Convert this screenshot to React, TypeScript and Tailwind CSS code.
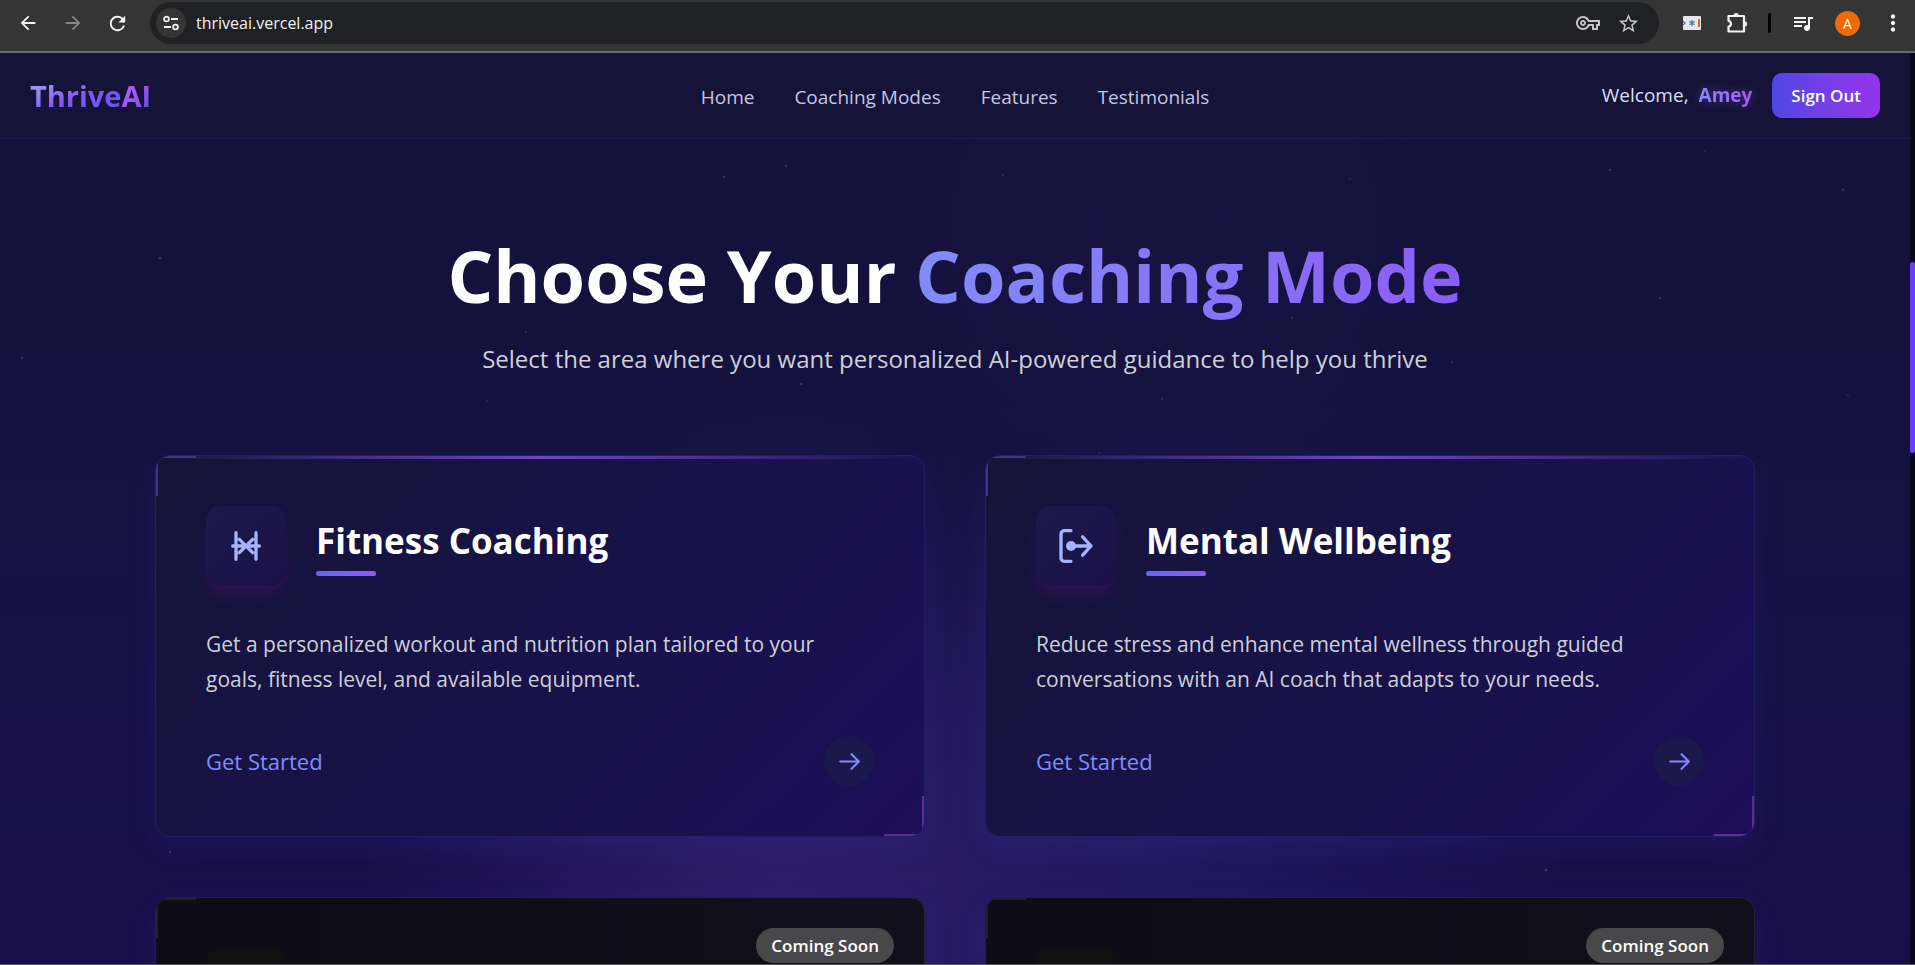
import type { ReactNode } from "react";
import {
  MdArrowBack,
  MdArrowForward,
  MdMoreVert,
  MdOutlineVpnKey,
  MdQueueMusic,
  MdRefresh,
  MdStarBorder,
} from "react-icons/md";

const STARS: [number, number, number][] = [
  [724, 124, 0.25], [786, 113, 0.2], [1003, 122, 0.15], [1610, 117, 0.25], [1705, 98, 0.12],
  [1843, 137, 0.2], [1660, 245, 0.2], [1452, 309, 0.15], [160, 205, 0.25], [22, 305, 0.2],
  [526, 279, 0.15], [801, 331, 0.2], [487, 348, 0.15], [1162, 346, 0.15], [1350, 126, 0.12],
  [1848, 342, 0.12], [1099, 400, 0.12], [1546, 817, 0.3], [170, 799, 0.2], [1292, 265, 0.15],
];

function ToolbarButton({ label, children, dim }: { label: string; children: ReactNode; dim?: boolean }) {
  return (
    <button
      type="button"
      aria-label={label}
      className={`flex h-[42px] w-[45px] items-center justify-center ${dim ? "text-[#858585]" : "text-[#f5f5f5]"}`}
    >
      {children}
    </button>
  );
}

function PuzzleIcon() {
  return (
    <svg width="24" height="24" viewBox="0 0 24 24" fill="none" stroke="currentColor" strokeWidth="2.2" strokeLinejoin="round">
      <path d="M3.5 5H19v15.5H3.5v-4.6a3.2 3.2 0 0 0 0-6.2z" />
      <path d="M8.6 4.5a2.6 2.6 0 0 1 5.2 0zM19.5 10.3a2.6 2.6 0 0 1 0 5.2z" fill="currentColor" stroke="none" />
    </svg>
  );
}

function PasswordIcon() {
  return (
    <svg width="18" height="14" viewBox="0 0 18 14">
      <rect width="18" height="14" rx="1" fill="#e4e7ea" />
      <path d="M0 5l2 2-2 2M9 4v6M6.4 5.5l5.2 3M11.6 5.5l-5.2 3" stroke="#4c7385" strokeWidth="1.3" fill="none" />
      <rect x="15" y="3" width="2" height="8" fill="#e05a4f" />
    </svg>
  );
}

function SiteInfoIcon() {
  return (
    <svg width="16" height="16" viewBox="0 0 16 16" fill="none" stroke="#f1f1f1" strokeWidth="1.8">
      <circle cx="3.5" cy="4" r="2.4" />
      <path d="M8 4h7M1 12h7" />
      <circle cx="12.5" cy="12" r="2.4" />
    </svg>
  );
}

function BrowserBar() {
  return (
    <div className="flex h-[53px] shrink-0 items-start border-b-2 border-[#6b6b6b] bg-[#353535] pt-[2px] pl-[5px]">
      <ToolbarButton label="Back"><MdArrowBack size={22} /></ToolbarButton>
      <ToolbarButton label="Forward" dim><MdArrowForward size={22} /></ToolbarButton>
      <ToolbarButton label="Reload"><MdRefresh size={23} /></ToolbarButton>
      <div className="ml-[10px] flex h-[42px] flex-1 items-center rounded-full bg-[#202124] pr-[19px] pl-[6px]">
        <button type="button" aria-label="Site information" className="flex size-[30px] items-center justify-center rounded-full bg-[#353535]">
          <SiteInfoIcon />
        </button>
        <input
          aria-label="Address"
          defaultValue="thriveai.vercel.app"
          className="ml-[10px] min-w-0 flex-1 bg-transparent text-[16px] text-[#f1f1f1] outline-none"
        />
        <button type="button" aria-label="Passwords" className="text-[#c4c4c4]"><MdOutlineVpnKey size={24} /></button>
        <button type="button" aria-label="Bookmark" className="ml-[17px] text-[#c4c4c4]"><MdStarBorder size={23} /></button>
      </div>
      <div className="ml-[10px] flex items-center">
        <ToolbarButton label="Password manager"><PasswordIcon /></ToolbarButton>
        <ToolbarButton label="Extensions"><PuzzleIcon /></ToolbarButton>
        <span className="mx-[9px] h-[20px] w-[3px] rounded-full bg-black" />
        <ToolbarButton label="Media"><MdQueueMusic size={24} /></ToolbarButton>
        <ToolbarButton label="Profile">
          <span className="flex size-[25px] items-center justify-center rounded-full bg-[#f06a00] text-[14px] text-white">A</span>
        </ToolbarButton>
        <ToolbarButton label="Menu"><MdMoreVert size={26} /></ToolbarButton>
      </div>
    </div>
  );
}

function SiteHeader() {
  return (
    <header className="relative grid grid-cols-[1fr_auto_1fr] items-center border-b border-[#1f1b55] bg-[#151338] px-[30px] py-[20px]">
      <a href="#home" className="flex justify-self-start text-[29px] leading-[40px] font-bold">
        <span className="bg-linear-to-br from-[#a5b0fc] via-[#8558f5] to-[#5b50f0] bg-clip-text text-transparent">Thrive</span>
        <span className="bg-linear-to-br from-[#b765fb] via-[#a352f5] to-[#4f46e5] bg-clip-text text-transparent">AI</span>
      </a>
      <nav className="flex gap-[40px] pt-[2px] text-[19px] leading-[28px] text-[#c3c6e4]">
        <a href="#home">Home</a>
        <a href="#modes">Coaching Modes</a>
        <a href="#features">Features</a>
        <a href="#testimonials">Testimonials</a>
      </nav>
      <div className="flex items-center justify-self-end text-[19px]">
        <span className="text-[#d9defa]">Welcome,</span>
        <span className="ml-[10px] bg-linear-to-r from-[#818cf8] to-[#a855f7] bg-clip-text font-bold text-transparent drop-shadow-[0_0_5px_rgba(139,92,246,0.4)]">
          Amey
        </span>
        <button
          type="button"
          className="ml-[20px] h-[45px] rounded-[10px] bg-linear-to-r from-[#4f46e5] to-[#9333ea] px-[19px] text-[17px] font-semibold text-white"
        >
          Sign Out
        </button>
      </div>
    </header>
  );
}

function FitnessIcon() {
  return (
    <svg width="40" height="40" viewBox="0 0 24 24" fill="none" stroke="#a5b4fc" strokeWidth="2" strokeLinecap="round" strokeLinejoin="round">
      <path d="M6 4v16M18 4v16M4 12h16M8 8l8 8M16 8l-8 8" />
    </svg>
  );
}

function MentalIcon() {
  return (
    <svg width="40" height="40" viewBox="0 0 24 24" fill="none" stroke="#a5b4fc" strokeWidth="2" strokeLinecap="round" strokeLinejoin="round">
      <path d="M9 21.2H5a2 2 0 0 1-2-2V4.8a2 2 0 0 1 2-2h4M16 6.5l5 5.5-5 5.5M21 12H9" />
      <circle cx="9" cy="12" r="3" fill="#a5b4fc" stroke="none" />
    </svg>
  );
}

function ModeCard({ icon, title, text }: { icon: ReactNode; title: string; text: string }) {
  return (
    <article className="relative overflow-hidden rounded-[15px] border border-[#231e62] bg-linear-135 from-[#141438] via-[#181248] to-[#1c0e58] p-[50px]">
      <span className="absolute inset-x-0 top-0 h-[3px] bg-linear-to-r from-transparent via-[#6d45c4] to-transparent" />
      <span className="absolute top-0 left-0 size-[40px] border-t-2 border-l-2 border-[#3b378f]" />
      <span className="absolute right-0 bottom-0 size-[40px] border-r-2 border-b-2 border-[#5b2e9c]" />
      <div className="flex items-center gap-[30px]">
        <div className="flex size-[80px] items-center justify-center rounded-[15px] bg-linear-135 from-[#1a1b4b] to-[#1b1048] shadow-[0_10px_15px_-3px_rgba(88,20,110,0.4),0_4px_6px_-4px_rgba(88,20,110,0.4)]">
          {icon}
        </div>
        <div>
          <h2 className="text-[35px] leading-[48px] font-bold text-white">{title}</h2>
          <div className="mt-[6px] h-[5px] w-[60px] rounded-full bg-linear-to-r from-[#6366f1] to-[#8b5cf6]" />
        </div>
      </div>
      <p className="mt-[41px] max-w-[630px] text-[21px] leading-[35px] text-[#cdcfd8]">{text}</p>
      <a href="#start" className="mt-[39px] flex items-center justify-between text-[22px] font-medium text-[#818cf8]">
        Get Started
        <span className="flex size-[50px] items-center justify-center rounded-full bg-[#1b184b]">
          <svg width="25" height="25" viewBox="0 0 24 24" fill="none" stroke="currentColor" strokeWidth="2" strokeLinecap="round" strokeLinejoin="round">
            <path d="M14 5l7 7-7 7M21 12H3" />
          </svg>
        </span>
      </a>
    </article>
  );
}

function ComingSoonCard() {
  return (
    <article className="relative min-h-[380px] overflow-hidden rounded-[15px] border border-[#25232b] bg-linear-to-r from-[#0e0c16] to-[#110f1b] p-[50px]">
      <span className="absolute top-0 left-0 size-[40px] border-t-2 border-l-2 border-[#222128]" />
      <span className="absolute top-[30px] right-[30px] rounded-full bg-[#48474a] px-[15px] text-[17px] leading-[35px] font-semibold text-white">
        Coming Soon
      </span>
      <div className="size-[80px] rounded-[15px] bg-[#111112]" />
    </article>
  );
}

export default function App() {
  return (
    <div className="flex h-screen flex-col overflow-hidden border-b border-[#55545a] bg-[#14113a] font-['Open_Sans','Noto_Sans',sans-serif]">
      <BrowserBar />
      <div className="flex min-h-0 flex-1">
        <div className="relative min-w-0 flex-1 overflow-hidden bg-linear-to-b from-[#14113a] via-[#151140] to-[#190e4b]">
          <div className="absolute inset-0 bg-[radial-gradient(420px_480px_at_41%_92%,rgba(66,44,140,0.5),transparent),radial-gradient(380px_420px_at_62%_85%,rgba(48,42,136,0.35),transparent),radial-gradient(300px_300px_at_61%_20%,rgba(34,28,80,0.2),transparent)]" />
          <svg className="absolute inset-0 size-full" aria-hidden="true">
            {STARS.map(([x, y, o]) => (
              <circle key={`${x}-${y}`} cx={`${(x / 19.1).toFixed(2)}%`} cy={y} r="1.3" fill="#a5a8e0" opacity={o} />
            ))}
          </svg>
          <SiteHeader />
          <main className="relative mx-auto max-w-[1600px] pt-[100px]">
            <h1 className="text-center text-[72px] leading-[72px] font-bold text-white">
              Choose Your{" "}
              <span className="bg-linear-to-r from-[#818cf8] to-[#8b5cf6] box-decoration-clone bg-clip-text pb-[10px] text-transparent">
                Coaching Mode
              </span>
            </h1>
            <p className="mt-[30px] text-center text-[24px] leading-[36px] text-[#cdcfd8]">
              Select the area where you want personalized AI-powered guidance to help you thrive
            </p>
            <div className="mt-[78px] grid grid-cols-2 gap-[60px] *:shadow-[0_10px_30px_rgba(79,70,229,0.12)]">
              <ModeCard
                icon={<FitnessIcon />}
                title="Fitness Coaching"
                text="Get a personalized workout and nutrition plan tailored to your goals, fitness level, and available equipment."
              />
              <ModeCard
                icon={<MentalIcon />}
                title="Mental Wellbeing"
                text="Reduce stress and enhance mental wellness through guided conversations with an AI coach that adapts to your needs."
              />
              <ComingSoonCard />
              <ComingSoonCard />
            </div>
          </main>
        </div>
        <div className="w-[5px] bg-[#080818] pt-[209px]">
          <div className="h-[191px] rounded-full bg-[#6d3dff]" />
        </div>
      </div>
    </div>
  );
}
